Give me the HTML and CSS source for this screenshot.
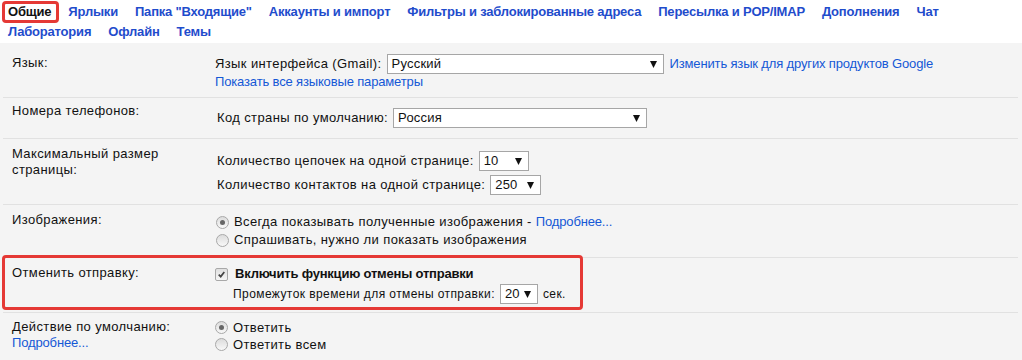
FILE: index.html
```html
<!DOCTYPE html>
<html lang="ru">
<head>
  <meta charset="UTF-8" />
  <title>Настройки</title>
  <link rel="stylesheet" href="styles.css">
</head>
<body>
  <nav class="tabs">
    <a class="tab active">Общие</a>
    <a class="tab">Ярлыки</a>
    <a class="tab">Папка "Входящие"</a>
    <a class="tab">Аккаунты и импорт</a>
    <a class="tab">Фильтры и заблокированные адреса</a>
    <a class="tab">Пересылка и POP/IMAP</a>
    <a class="tab">Дополнения</a>
    <a class="tab">Чат</a>
    <a class="tab">Лаборатория</a>
    <a class="tab">Офлайн</a>
    <a class="tab">Темы</a>
  </nav>

  <div class="settings">
    <div class="row row-lang">
      <div class="label">Язык:</div>
      <div class="value">
        <div class="line">
          <span class="field">Язык интерфейса (Gmail):</span>
          <span class="select w-lang"><span>Русский</span><svg class="arrow" viewBox="0 0 7 7"><polygon points="0,0 7,0 3.5,7"/></svg></span>
          <a class="link side">Изменить язык для других продуктов Google</a>
        </div>
        <div class="line"><a class="link">Показать все языковые параметры</a></div>
      </div>
    </div>

    <div class="row row-phone">
      <div class="label">Номера телефонов:</div>
      <div class="value">
        <div class="line">
          <span class="field">Код страны по умолчанию:</span>
          <span class="select w-country"><span>Россия</span><svg class="arrow" viewBox="0 0 7 7"><polygon points="0,0 7,0 3.5,7"/></svg></span>
        </div>
      </div>
    </div>

    <div class="row row-size">
      <div class="label">Максимальный размер<br>страницы:</div>
      <div class="value stack">
        <div class="line">
          <span>Количество цепочек на одной странице:</span>
          <span class="select w-10"><span>10</span><svg class="arrow" viewBox="0 0 7 7"><polygon points="0,0 7,0 3.5,7"/></svg></span>
        </div>
        <div class="line">
          <span>Количество контактов на одной странице:</span>
          <span class="select w-250"><span>250</span><svg class="arrow" viewBox="0 0 7 7"><polygon points="0,0 7,0 3.5,7"/></svg></span>
        </div>
      </div>
    </div>

    <div class="row row-images">
      <div class="label">Изображения:</div>
      <div class="value">
        <label class="option"><span class="radio checked"></span><span>Всегда показывать полученные изображения - <a class="link">Подробнее...</a></span></label>
        <label class="option"><span class="radio"></span><span>Спрашивать, нужно ли показать изображения</span></label>
      </div>
    </div>

    <div class="row row-undo">
      <div class="label">Отменить отправку:</div>
      <div class="value">
        <label class="option strong"><span class="checkbox"><svg viewBox="0 0 13 13"><path d="M3.2 6.6 L5.6 9 L9.8 3.6"/></svg></span><span>Включить функцию отмены отправки</span></label>
        <div class="line small">
          <span>Промежуток времени для отмены отправки:</span>
          <span class="select w-20"><span>20</span><svg class="arrow" viewBox="0 0 7 7"><polygon points="0,0 7,0 3.5,7"/></svg></span>
          <span>сек.</span>
        </div>
      </div>
      <div class="highlight"></div>
    </div>

    <div class="row row-reply">
      <div class="label">Действие по умолчанию:<br><a class="link">Подробнее...</a></div>
      <div class="value">
        <label class="option"><span class="radio checked"></span><span>Ответить</span></label>
        <label class="option"><span class="radio"></span><span>Ответить всем</span></label>
      </div>
    </div>
  </div>
</body>
</html>
```

FILE: styles.css
```css
*, *::before, *::after {
  box-sizing: border-box;
}

body {
  margin: 0;
  background: #fff;
  font-family: "Liberation Sans", Arial, sans-serif;
  font-size: 13px;
  letter-spacing: 0.38px;
  color: #111;
  height: 360px;
  overflow: hidden;
}

/* Tabs */
.tabs {
  display: flex;
  flex-wrap: wrap;
  column-gap: 17px;
  padding: 2px 0 1px 8px;
}

.tab {
  font-weight: bold;
  line-height: 20px;
  letter-spacing: -0.2px;
  color: #1f4ccc;
  cursor: pointer;
}

.tab.active {
  color: #111;
  position: relative;
}

.tab.active::after {
  content: "";
  position: absolute;
  top: -1px;
  bottom: -1px;
  left: -6px;
  right: -8px;
  border: 3px solid #e53935;
  border-radius: 4px;
}

/* Settings table */
.settings {
  background: #f4f4f4;
  padding: 0 4px 0 3px;
  height: 318px;
}

.row {
  display: flex;
  border-bottom: 1px solid #e1e1e1;
  line-height: 16px;
  position: relative;
}

.label {
  width: 212px;
  flex: none;
  padding-left: 9px;
}

.value {
  display: flex;
  flex-direction: column;
}

.line {
  display: flex;
  align-items: center;
  gap: 5px;
}

.link {
  color: #1558d6;
  letter-spacing: -0.15px;
  cursor: pointer;
}

.link.side {
  margin-left: 1px;
}

/* Fake select */
.select {
  display: inline-flex;
  align-items: center;
  justify-content: space-between;
  height: 20px;
  padding: 0 6px 0 4px;
  background: #fff;
  border: 1px solid #a6a6a6;
  font-size: 13px;
  letter-spacing: 0.2px;
}

.arrow {
  width: 7px;
  height: 7px;
  fill: #111;
}

.w-lang { width: 277px; }
.w-country { width: 254px; }
.w-10 { width: 50px; }
.w-250 { width: 51px; }
.w-20 { width: 38px; }

/* Radios and checkbox */
.option {
  display: flex;
  align-items: center;
  gap: 5px;
  line-height: 18px;
}

.option.strong {
  font-weight: bold;
  letter-spacing: -0.2px;
}

.radio {
  width: 13px;
  height: 13px;
  border-radius: 50%;
  border: 1px solid #a8a8a8;
  background: linear-gradient(#dcdcdc, #f8f8f8);
  display: inline-flex;
  align-items: center;
  justify-content: center;
  flex: none;
}

.radio.checked::after {
  content: "";
  width: 5px;
  height: 5px;
  border-radius: 50%;
  background: #666;
}

.checkbox {
  width: 13px;
  height: 13px;
  border: 1px solid #a8a8a8;
  border-radius: 2px;
  background: linear-gradient(#e0e0e0, #f6f6f6);
  display: inline-flex;
  flex: none;
  margin-right: 2px;
}

.checkbox svg {
  width: 11px;
  height: 11px;
  fill: none;
  stroke: #444;
  stroke-width: 2;
}

/* Row specific spacing */
.row-lang {
  padding: 11px 0 7px;
}
.row-lang .label {
  padding-top: 1px;
}

.row-phone {
  padding: 5px 0 10px;
}
.row-phone .value {
  padding-top: 5px;
  padding-left: 2px;
}

.row-size {
  padding: 7px 0 9px;
}
.row-size .value {
  padding-top: 5px;
  padding-left: 2px;
  gap: 4px;
}

.row-images {
  padding: 7px 0 8px;
}
.row-images .value {
  padding-top: 1px;
  padding-left: 1px;
}

.row-undo {
  padding: 7px 0 8px;
}
.row-undo .line.small {
  font-size: 12px;
  letter-spacing: 0.42px;
  padding-left: 18px;
  margin-top: 1px;
}

.highlight {
  position: absolute;
  top: -3px;
  left: -1px;
  width: 581px;
  height: 55px;
  border: 3px solid #e53935;
  border-radius: 4px;
}

.row-reply {
  padding: 6px 0 8px;
  border-bottom: none;
}
.row-reply .option {
  line-height: 17px;
}
```
